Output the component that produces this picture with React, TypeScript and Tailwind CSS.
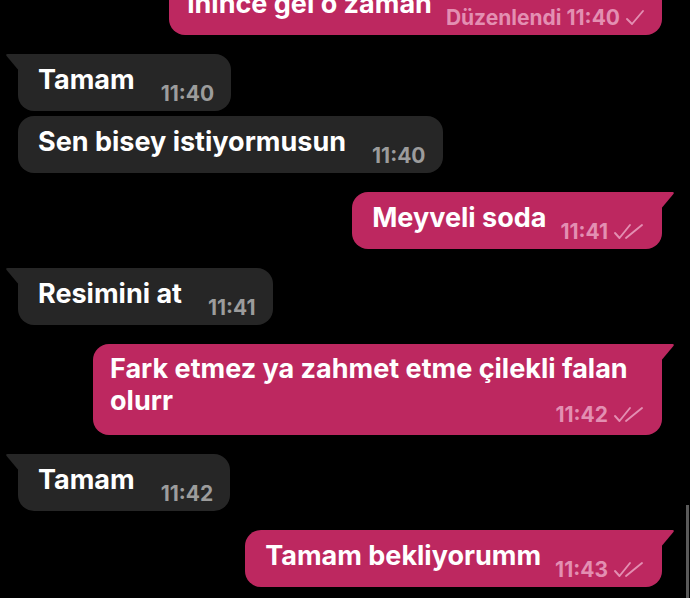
import type { ReactNode } from "react";

type Message = {
	id: number;
	out: boolean;
	text: string;
	time: string;
	tail?: boolean;
	edited?: boolean;
	ticks?: 1 | 2;
	lastLine?: string;
	tight?: boolean;
};

const messages: Message[] = [
	{ id: 1, out: true, text: "inince gel o zaman", time: "11:40", edited: true, ticks: 1 },
	{ id: 2, out: false, text: "Tamam", time: "11:40", tail: true },
	{ id: 3, out: false, text: "Sen bisey istiyormusun", time: "11:40", tight: true },
	{ id: 4, out: true, text: "Meyveli soda", time: "11:41", tail: true, ticks: 2 },
	{ id: 5, out: false, text: "Resimini at", time: "11:41", tail: true },
	{
		id: 6,
		out: true,
		text: "Fark etmez ya zahmet etme çilekli falan",
		lastLine: "olurr",
		time: "11:42",
		tail: true,
		ticks: 2,
	},
	{ id: 7, out: false, text: "Tamam", time: "11:42", tail: true },
	{ id: 8, out: true, text: "Tamam bekliyorumm", time: "11:43", tail: true, ticks: 2 },
];

function SingleTick() {
	return (
		<svg width="20" height="17" viewBox="0 0 20 17" fill="none" className="ml-[5px]">
			<path d="M2 10 L7 15 L18 2" stroke="#e38fb2" strokeWidth="1.9" strokeLinecap="round" strokeLinejoin="round" />
		</svg>
	);
}

function DoubleTick() {
	return (
		<svg width="32" height="17" viewBox="0 0 32 17" fill="none" className="ml-[5px]">
			<path d="M2 10 L6.5 15 L17 2" stroke="#e38fb2" strokeWidth="1.9" strokeLinecap="round" strokeLinejoin="round" />
			<path d="M13 15 L29 2" stroke="#e38fb2" strokeWidth="1.9" strokeLinecap="round" />
		</svg>
	);
}

function Tail({ out }: { out: boolean }) {
	if (out) {
		return (
			<svg
				width="15"
				height="18"
				viewBox="0 0 15 18"
				className="absolute top-0 right-[-13px]"
			>
				<path d="M0 0 H12.5 Q14.6 0 13.4 2 L0 18 Z" fill="#bd2860" />
			</svg>
		);
	}
	return (
		<svg
			width="15"
			height="18"
			viewBox="0 0 15 18"
			className="absolute top-0 left-[-13px]"
		>
			<path d="M15 0 H2.5 Q0.4 0 1.6 2 L15 18 Z" fill="#262626" />
		</svg>
	);
}

function Meta({ m }: { m: Message }) {
	return (
		<span
			className={`flex shrink-0 items-center text-[21px] leading-none font-bold ${
				m.out ? "text-[#e38fb2]" : "text-[#9c9c9c]"
			}`}
		>
			{m.edited && <span className="mr-[5px]">Düzenlendi</span>}
			{m.time}
			{m.ticks === 1 && <SingleTick />}
			{m.ticks === 2 && <DoubleTick />}
		</span>
	);
}

function Bubble({ m }: { m: Message }) {
	const shape = m.out
		? m.tail
			? "rounded-[16px] rounded-tr-none bg-[#bd2860]"
			: "rounded-[16px] bg-[#bd2860]"
		: m.tail
			? "rounded-[16px] rounded-tl-none bg-[#262626]"
			: "rounded-[16px] bg-[#262626]";

	let body: ReactNode;
	if (m.lastLine) {
		// two-line message: time sits on the right of the last line
		body = (
			<div className="flex w-[569px] flex-col pt-[9px] pr-[17px] pb-[10px] pl-[17px]">
				<span className="text-[27px] leading-[32px] font-bold text-white">{m.text}</span>
				<div className="flex items-start justify-between">
					<span className="text-[27px] leading-[32px] font-bold text-white">{m.lastLine}</span>
					<span className="mt-[19px]">
						<Meta m={m} />
					</span>
				</div>
			</div>
		);
	} else {
		body = (
			<div
				className={`flex h-[57px] items-start ${
					m.out ? (m.edited ? "pl-[18px]" : "pl-[20px]") : "pl-[20px]"
				} pr-[17px]`}
			>
				<span className="mt-[9px] text-[27px] leading-[33px] font-bold whitespace-nowrap text-white">
					{m.text}
				</span>
				<span className={`mt-auto mb-[7px] ${m.out ? "ml-[14px]" : "ml-[26px]"}`}>
					<Meta m={m} />
				</span>
			</div>
		);
	}

	return (
		<div
			className={`flex ${m.out ? "justify-end pr-[28px]" : "justify-start pl-[18px]"} ${
				m.id === 1 ? "-mt-[22px]" : m.tight ? "mt-[5px]" : "mt-[19px]"
			}`}
		>
			<div className={`relative ${shape}`}>
				{m.tail && <Tail out={m.out} />}
				{body}
			</div>
		</div>
	);
}

export default function App() {
	return (
		<div
			className="relative h-[598px] w-[690px] overflow-hidden bg-black"
			style={{ fontFamily: "Inter, 'Liberation Sans', sans-serif" }}
		>
			<div className="flex flex-col">
				{messages.map((m) => (
					<Bubble key={m.id} m={m} />
				))}
			</div>
			{/* scroll indicator */}
			<div className="absolute top-[505px] right-[1px] h-[93px] w-[3px] bg-[#5a5a5a]" />
		</div>
	);
}
